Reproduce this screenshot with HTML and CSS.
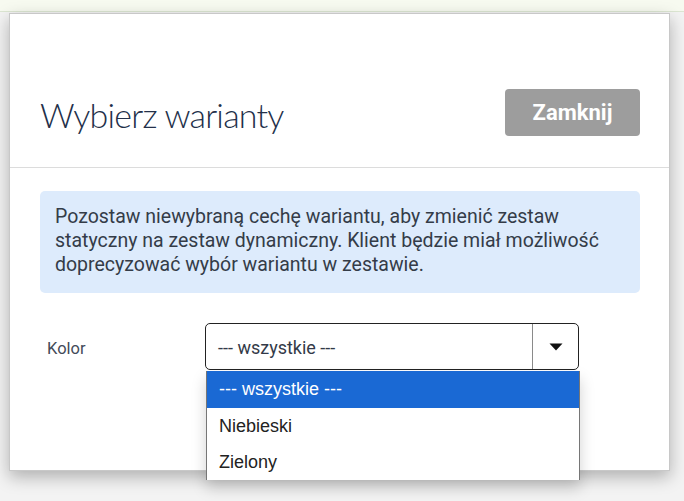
FILE: index.html
```html
<!DOCTYPE html>
<html lang="pl">
<head>
<meta charset="utf-8">
<title>Wybierz warianty</title>
<link rel="stylesheet" href="styles.css">
</head>
<body>
<div class="topbar"></div>
<div class="stage">
  <div class="modal">
    <div class="modal-header">
      <h2 class="title">Wybierz warianty</h2>
      <button class="btn-close">Zamknij</button>
    </div>
    <div class="modal-body">
      <div class="info">Pozostaw niewybraną cechę wariantu, aby zmienić zestaw statyczny na zestaw dynamiczny. Klient będzie miał możliwość doprecyzować wybór wariantu w zestawie.</div>
      <div class="form-row">
        <label class="label">Kolor</label>
        <div class="select-wrap">
          <div class="select">
            <span class="select-value">--- wszystkie ---</span>
            <span class="select-arrow"><svg width="14" height="8" viewBox="0 0 14 8"><path d="M0.5 0.5 L13.5 0.5 L7 7.5 Z" fill="#111"/></svg></span>
          </div>
          <ul class="dropdown">
            <li class="opt active">--- wszystkie ---</li>
            <li class="opt">Niebieski</li>
            <li class="opt">Zielony</li>
          </ul>
        </div>
      </div>
    </div>
  </div>
</div>
</body>
</html>
```

FILE: styles.css
```css
html, body {
  margin: 0;
  padding: 0;
}
body {
  background: #f3f3f3;
  font-family: Roboto, "Liberation Sans", Arial, sans-serif;
  height: 501px;
  overflow: hidden;
}
.topbar {
  height: 11px;
  background: #f7faf0;
  border-bottom: 1px solid #dce6d2;
}
.stage {
  padding: 1px 0 0 9px;
}
.modal {
  width: 659px;
  height: 456px;
  background: #fff;
  border: 1px solid #c8c8c8;
  box-shadow: 0 6px 16px rgba(0, 0, 0, 0.28);
  position: relative;
}
.modal-header {
  display: flex;
  justify-content: space-between;
  align-items: center;
  padding: 75px 29px 31px 30px;
  border-bottom: 1px solid #dcdcdc;
}
.title {
  margin: 0;
  font-family: Lato, "Open Sans", sans-serif;
  font-weight: 300;
  font-size: 34px;
  letter-spacing: -0.8px;
  color: #23304a;
  line-height: 40px;
  position: relative;
  top: 2px;
}
.btn-close {
  width: 135px;
  height: 47px;
  border: none;
  border-radius: 4px;
  background: #9d9d9d;
  color: #fff;
  font-family: Roboto, sans-serif;
  font-weight: 700;
  font-size: 22px;
  padding: 0;
}
.modal-body {
  padding: 23px 29px 0 30px;
}
.info {
  background: #ddebfc;
  border-radius: 5px;
  padding: 14px 15px 16px 15px;
  font-size: 19.5px;
  line-height: 24px;
  color: #343c48;
}
.form-row {
  display: flex;
  align-items: center;
  margin-top: 30px;
}
.label {
  width: 158px;
  padding-left: 7px;
  padding-top: 4px;
  font-size: 16.5px;
  color: #434b59;
}
.select-wrap {
  position: relative;
}
.select {
  width: 372px;
  height: 45px;
  border: 1px solid #222;
  border-radius: 5px;
  display: flex;
  align-items: center;
}
.select-value {
  flex: 1;
  padding-left: 12px;
  padding-top: 1px;
  font-size: 18px;
  color: #333a48;
}
.select-arrow {
  width: 45px;
  height: 100%;
  border-left: 1px solid #8a8a8a;
  display: flex;
  align-items: center;
  justify-content: center;
}
.dropdown {
  position: absolute;
  top: 48px;
  left: 1px;
  width: 372px;
  margin: 0;
  padding: 0;
  list-style: none;
  background: #fff;
  border-left: 1px solid #767676;
  border-right: 1px solid #767676;
  font-family: "Liberation Sans", Arial, sans-serif;
  font-size: 18px;
  color: #222;
  box-shadow: 0 8px 14px rgba(0, 0, 0, 0.18);
}
.opt {
  height: 36px;
  line-height: 36px;
  padding-left: 12px;
}
.opt.active {
  height: 37px;
  line-height: 37px;
  background: #1a69d4;
  color: #fff;
}
```
